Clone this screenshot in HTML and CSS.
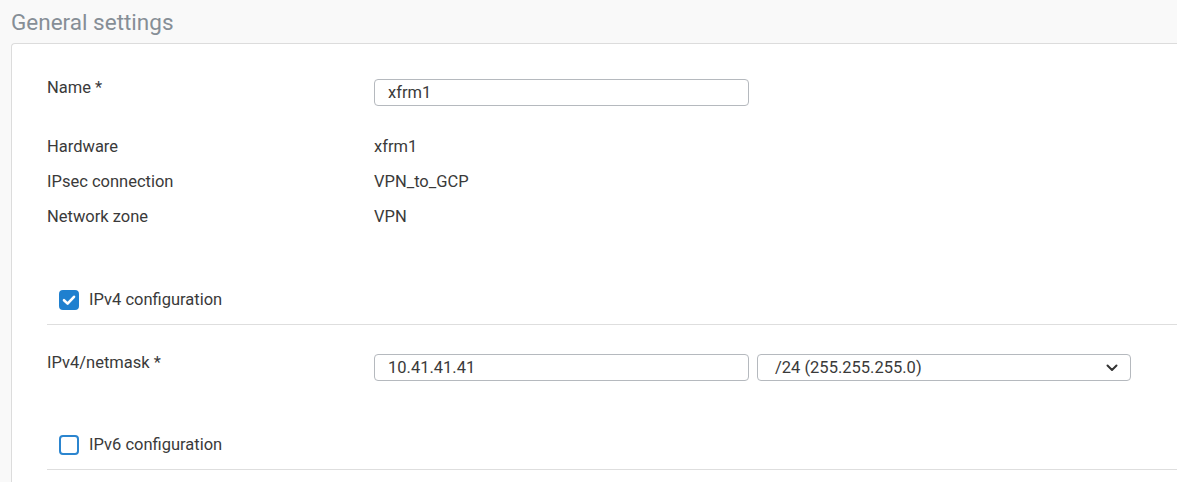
FILE: index.html
```html
<!DOCTYPE html>
<html>
<head>
<meta charset="utf-8">
<link rel="stylesheet" href="styles.css">
</head>
<body>
<h2 class="title">General settings</h2>
<div class="card">
  <div class="row row-input">
    <div class="label">Name *</div>
    <div class="field"><input class="text" type="text" value="xfrm1"></div>
  </div>
  <div class="info">
    <div class="row row-info"><div class="label">Hardware</div><div class="value">xfrm1</div></div>
    <div class="row row-info"><div class="label">IPsec connection</div><div class="value">VPN_to_GCP</div></div>
    <div class="row row-info"><div class="label">Network zone</div><div class="value">VPN</div></div>
  </div>
  <div class="section">
    <span class="check checked"><svg viewBox="0 0 20 20" width="20" height="20"><path d="M5 10.2 L8.6 13.6 L15 6.8" fill="none" stroke="#fff" stroke-width="2.6" stroke-linecap="round" stroke-linejoin="round"/></svg></span>
    <span class="section-label">IPv4 configuration</span>
  </div>
  <div class="row row-input row-ip">
    <div class="label">IPv4/netmask *</div>
    <div class="field fields">
      <input class="text" type="text" value="10.41.41.41">
      <div class="select"><span>/24 (255.255.255.0)</span><svg viewBox="0 0 12 8" width="12" height="8"><path d="M1.5 1.5 L6 6 L10.5 1.5" fill="none" stroke="#333" stroke-width="2" stroke-linecap="round" stroke-linejoin="round"/></svg></div>
    </div>
  </div>
  <div class="section section-v6">
    <span class="check"></span>
    <span class="section-label">IPv6 configuration</span>
  </div>
</div>
</body>
</html>
```
FILE: styles.css
```css
* { box-sizing: border-box; }
html, body { margin: 0; padding: 0; }
body {
  background: #f9f9f9;
  font-family: Roboto, "Liberation Sans", sans-serif;
  font-size: 16.5px;
  color: #3a3a3a;
  overflow: hidden;
  height: 482px;
}
.title {
  margin: 0;
  height: 43px;
  padding: 8px 0 0 11px;
  font-weight: 400;
  font-size: 22.5px;
  line-height: 28px;
  color: #868e96;
}
.card {
  margin-left: 11px;
  background: #fff;
  border: 1px solid #dcdcdc;
  border-right: none;
  border-bottom: none;
  border-radius: 4px 0 0 0;
  padding: 35px 0 0 35px;
  height: 439px;
}
.row {
  display: grid;
  grid-template-columns: 327px 1fr;
}
.label { line-height: 18px; }
.text {
  display: block;
  width: 375px;
  height: 27px;
  border: 1px solid #b5b9be;
  border-radius: 4px;
  padding: 0 13px;
  font-family: inherit;
  font-size: 16.5px;
  color: #3a3a3a;
  background: #fff;
  outline: none;
}
.info { margin-top: 23px; }
.row-info { height: 35px; align-items: center; }
.section {
  display: flex;
  align-items: center;
  margin-top: 41px;
  height: 50px;
  padding-left: 12px;
  border-bottom: 1px solid #dedede;
}
.check {
  width: 20px;
  height: 20px;
  border: 2px solid #2b85cf;
  border-radius: 4px;
  margin-right: 10px;
  display: inline-flex;
  background: #fff;
}
.check.checked {
  background: #1f80cf;
  border-color: #1f80cf;
}
.check.checked svg { margin: -2px; }
.section-label { line-height: 18px; }
.row-ip { margin-top: 29px; }
.fields { display: flex; gap: 8px; }
.select {
  width: 374px;
  height: 27px;
  border: 1px solid #b5b9be;
  border-radius: 4px;
  padding: 0 12px 0 17px;
  display: flex;
  align-items: center;
  justify-content: space-between;
}
.section-v6 { margin-top: 39px; height: 50px; }
```
